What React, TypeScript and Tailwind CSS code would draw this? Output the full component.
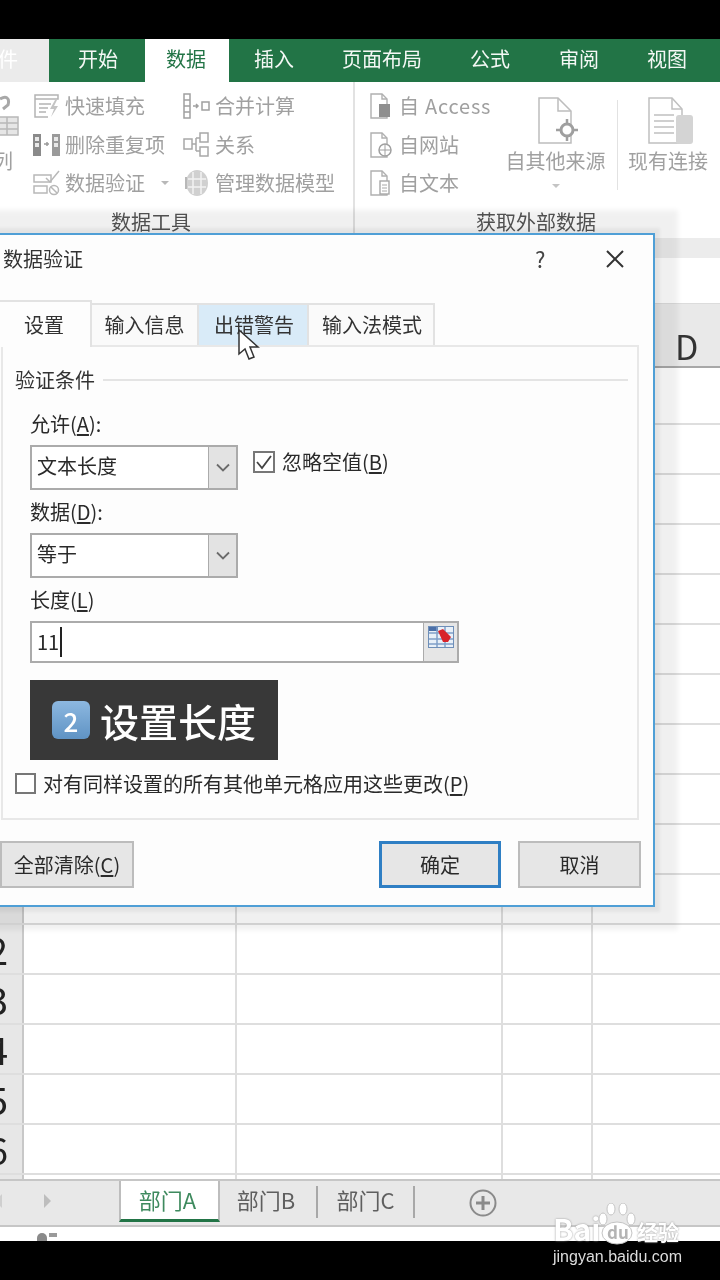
import React from 'react';

const font = "font-['Noto_Sans_CJK_SC','Noto_Sans',sans-serif]";
const rows = [1, 2, 3, 4, 5, 6, 7, 8, 9, 10, 11, 12, 13, 14, 15, 16];
const rowLabels: Record<number, string> = { 11: '2', 12: '3', 13: '4', 14: '5', 15: '6' };

const IconFlashFill = () => (
  <svg width="27" height="26" viewBox="0 0 27 26" fill="none" stroke="#b4b4b4" strokeWidth="1.5">
    <path d="M2 2h23v4H2zM2 6v18h13M6 11h12M6 15h9M6 19h7" />
    <path d="M22 7l-5 9h4l-3 8 7-11h-4l3-6z" fill="#c4c4c4" stroke="none" />
  </svg>
);
const IconDedupe = () => (
  <svg width="27" height="26" viewBox="0 0 27 26">
    <rect x="0" y="2" width="8" height="22" fill="#8a8a8a" />
    <rect x="2" y="5" width="4" height="4" fill="#e8e8e8" />
    <rect x="2" y="11" width="4" height="4" fill="#e8e8e8" />
    <rect x="19" y="2" width="8" height="22" fill="#9a9a9a" />
    <rect x="21" y="5" width="4" height="4" fill="#e8e8e8" />
    <rect x="21" y="11" width="4" height="4" fill="#e8e8e8" />
    <path d="M11 12h5M14 10v4" stroke="#9a9a9a" strokeWidth="1.5" />
  </svg>
);
const IconValidate = () => (
  <svg width="27" height="26" viewBox="0 0 27 26" fill="none" stroke="#b8b8b8" strokeWidth="1.5">
    <rect x="1" y="5" width="17" height="7" />
    <rect x="1" y="16" width="13" height="7" />
    <path d="M13 8l4 4L26 1" />
    <circle cx="21" cy="20" r="4.5" />
    <path d="M18 17l6 6" />
  </svg>
);
const IconConsolidate = () => (
  <svg width="27" height="26" viewBox="0 0 27 26" fill="none" stroke="#a0a0a0" strokeWidth="1.5">
    <rect x="1" y="1" width="6" height="24" />
    <path d="M1 7h6M1 13h6M1 19h6" />
    <path d="M10 13h5M13 11l2 2-2 2" />
    <rect x="19" y="9" width="7" height="8" />
  </svg>
);
const IconRelation = () => (
  <svg width="27" height="26" viewBox="0 0 27 26" fill="none" stroke="#a8a8a8" strokeWidth="1.5">
    <rect x="1" y="7" width="8" height="10" />
    <rect x="17" y="1" width="8" height="9" />
    <rect x="17" y="15" width="8" height="9" />
    <path d="M9 12h4M13 6v13M13 6h4M13 19h4" />
  </svg>
);
const IconModel = () => (
  <svg width="27" height="28" viewBox="0 0 27 28" fill="none">
    <ellipse cx="14" cy="14" rx="11" ry="13" fill="#d0d0d0" />
    <path d="M5 10h18M5 18h18M10 3v22M18 3v22" stroke="#f2f2f2" strokeWidth="1.5" />
    <path d="M3 8v12" stroke="#b8b8b8" strokeWidth="2" />
  </svg>
);
const FileShell = ({ children }: { children?: React.ReactNode }) => (
  <svg width="24" height="26" viewBox="0 0 24 26" fill="none">
    <path d="M1 1h11l5 5v19H1z" stroke="#b0b0b0" strokeWidth="1.4" fill="#fff" />
    <path d="M12 1v5h5" stroke="#b0b0b0" strokeWidth="1.4" />
    {children}
  </svg>
);

const RibbonRow = ({ icon, label, width, extra }: { icon: React.ReactNode; label: string; width: string; extra?: React.ReactNode }) => (
  <div className={`flex h-[38.5px] items-center ${width}`}>
    <div className="flex w-[32px] shrink-0 items-center">{icon}</div>
    <span className="whitespace-nowrap text-[20px] text-[#a0a0a0]">{label}</span>
    {extra}
  </div>
);

const Underlined = ({ before, letter, after }: { before: string; letter: string; after: string }) => (
  <span className="whitespace-nowrap">
    {before}(<u className="underline-offset-2">{letter}</u>){after}
  </span>
);

const ComboArrow = () => (
  <div className="flex w-[28px] shrink-0 items-center justify-center border-l border-[#ababab] bg-[#e3e3e3]">
    <svg width="14" height="9" viewBox="0 0 14 9" fill="none" stroke="#6b6b6b" strokeWidth="1.8">
      <path d="M1 1.5l6 6 6-6" />
    </svg>
  </div>
);

const Combo = ({ value }: { value: string }) => (
  <div className="flex h-[45px] w-[208px] border-2 border-[#ababab] bg-white">
    <div className="flex-1 pl-[5px] text-[20px] leading-[37px] text-[#2a2a2a]">{value}</div>
    <ComboArrow />
  </div>
);

const Checkbox = ({ checked, size }: { checked?: boolean; size: string }) => (
  <div className={`flex shrink-0 items-center justify-center border-2 border-[#777] bg-white ${size}`}>
    {checked && (
      <svg width="18" height="16" viewBox="0 0 18 16" fill="none" stroke="#444" strokeWidth="1.8">
        <path d="M2 8l5 6L16 2" />
      </svg>
    )}
  </div>
);

const DialogTab = ({ label, className }: { label: string; className: string }) => (
  <div className={`flex items-center justify-center whitespace-nowrap border-t-2 border-r-2 border-[#e2e2e2] text-[20px] text-[#333] ${className}`}>{label}</div>
);

const App: React.FC = () => {
  return (
    <div className={`relative flex h-[1280px] w-[720px] flex-col overflow-hidden bg-black ${font} blur-[0.5px]`}>
      <div className="h-[39px] shrink-0" />

      {/* Ribbon tabs */}
      <div className="flex h-[43px] shrink-0 items-stretch bg-[#227446] text-[20px] text-[#f4f8f5]">
        <div className="flex w-[49px] items-center overflow-hidden bg-[#ebebeb] pb-[3px] text-white">
          <span className="-ml-[2px]">件</span>
        </div>
        <div className="ml-[5px] flex items-center px-[24px] pb-[3px]">开始</div>
        <div className="ml-[3px] flex items-center bg-white pb-[3px] pl-[21px] pr-[23px] text-[#227446]">数据</div>
        <div className="flex items-center pb-[3px] pl-[25px] pr-[24px]">插入</div>
        <div className="flex items-center px-[24px] pb-[3px]">页面布局</div>
        <div className="flex items-center pb-[3px] pl-[24px] pr-[25px]">公式</div>
        <div className="flex items-center px-[24px] pb-[3px]">审阅</div>
        <div className="flex items-center px-[24px] pb-[3px]">视图</div>
      </div>

      {/* Ribbon body */}
      <div className="flex h-[156px] shrink-0 bg-white">
        <div className="flex w-[355px] shrink-0 flex-col border-r-2 border-[#e2e2e2]">
          <div className="flex h-[128px] pt-[5px]">
            <div className="flex w-[33px] shrink-0 flex-col overflow-hidden">
              <svg width="20" height="56" viewBox="0 0 20 56" fill="none" className="mt-[6px]">
                <path d="M0 6c6-4 10-1 8 6l-5 4" stroke="#a8a8a8" strokeWidth="3" />
                <rect x="-4" y="24" width="22" height="18" fill="#e6e6e6" stroke="#b8b8b8" strokeWidth="1.5" />
                <path d="M-4 30h22M-4 36h22M7 24v18" stroke="#b8b8b8" strokeWidth="1.5" />
              </svg>
              <span className="-ml-[7px] -mt-[3px] text-[20px] text-[#a0a0a0]">列</span>
            </div>
            <div className="flex w-[150px] shrink-0 flex-col">
              <RibbonRow icon={<IconFlashFill />} label="快速填充" width="w-full" />
              <RibbonRow icon={<IconDedupe />} label="删除重复项" width="w-full" />
              <RibbonRow
                icon={<IconValidate />}
                label="数据验证"
                width="w-full"
                extra={<span className="ml-[16px] h-0 w-0 border-x-[4px] border-t-[4px] border-x-transparent border-t-[#b8b8b8]" />}
              />
            </div>
            <div className="flex flex-col">
              <RibbonRow icon={<IconConsolidate />} label="合并计算" width="w-[170px]" />
              <RibbonRow icon={<IconRelation />} label="关系" width="w-[170px]" />
              <RibbonRow icon={<IconModel />} label="管理数据模型" width="w-[170px]" />
            </div>
          </div>
          <div className="pl-[111px] text-[20px] leading-[24px] text-[#555]">数据工具</div>
        </div>

        <div className="flex flex-1 flex-col">
          <div className="flex h-[128px] pt-[5px]">
            <div className="ml-[15px] flex w-[135px] shrink-0 flex-col">
              <div className="flex h-[38.5px] items-center">
                <div className="w-[29px] shrink-0">
                  <FileShell>
                    <rect x="9" y="11" width="11" height="13" fill="#8f8f8f" />
                  </FileShell>
                </div>
                <span className="whitespace-nowrap text-[20px] tracking-[0.8px] text-[#a0a0a0]">自 Access</span>
              </div>
              <div className="flex h-[38.5px] items-center">
                <div className="w-[29px] shrink-0">
                  <FileShell>
                    <circle cx="15" cy="18" r="6" fill="#fff" stroke="#a0a0a0" strokeWidth="1.5" />
                    <path d="M9 18h12M15 12v12" stroke="#a0a0a0" />
                  </FileShell>
                </div>
                <span className="whitespace-nowrap text-[20px] text-[#a0a0a0]">自网站</span>
              </div>
              <div className="flex h-[38.5px] items-center">
                <div className="w-[29px] shrink-0">
                  <FileShell>
                    <rect x="10" y="11" width="9" height="13" fill="#fff" stroke="#a8a8a8" strokeWidth="1.4" />
                    <path d="M12 15h5M12 18h5M12 21h5" stroke="#a8a8a8" />
                  </FileShell>
                </div>
                <span className="whitespace-nowrap text-[20px] text-[#a0a0a0]">自文本</span>
              </div>
            </div>
            <div className="flex w-[101px] shrink-0 flex-col items-center">
              <svg width="44" height="48" viewBox="0 0 44 48" fill="none" className="ml-[6px] mt-[10px]">
                <path d="M2 1h19l13 13v32H2z" stroke="#bdbdbd" strokeWidth="1.5" fill="#fff" />
                <path d="M21 1v13h13" stroke="#bdbdbd" strokeWidth="1.5" />
                <circle cx="30" cy="33" r="6" stroke="#9f9f9f" strokeWidth="3" fill="#fff" />
                <path d="M30 22v5M30 39v5M19 33h5M36 33h5" stroke="#9f9f9f" strokeWidth="2.5" />
              </svg>
              <span className="mt-[1px] whitespace-nowrap text-[20px] text-[#a0a0a0]">自其他来源</span>
              <span className="mt-[8px] h-0 w-0 border-x-[4px] border-t-[4px] border-x-transparent border-t-[#c4c4c4]" />
            </div>
            <div className="ml-[11px] mt-[13px] h-[90px] w-[1px] shrink-0 bg-[#e2e2e2]" />
            <div className="ml-[10px] flex w-[80px] shrink-0 flex-col items-center">
              <svg width="46" height="48" viewBox="0 0 46 48" fill="none" className="ml-[6px] mt-[10px]">
                <path d="M1 1h23l10 11v34H1z" stroke="#c0c0c0" strokeWidth="1.5" fill="#fff" />
                <path d="M24 1v11h10M6 18h20M6 24h20M6 30h20M6 36h20" stroke="#c0c0c0" strokeWidth="1.5" />
                <rect x="28" y="18" width="17" height="29" rx="3" fill="#d4d4d4" />
              </svg>
              <span className="mt-[1px] whitespace-nowrap text-[20px] text-[#a0a0a0]">现有连接</span>
            </div>
          </div>
          <div className="pl-[121px] text-[20px] leading-[24px] text-[#555]">获取外部数据</div>
        </div>
      </div>

      {/* Formula bar area */}
      <div className="h-[65px] shrink-0 bg-white">
        <div className="h-[20px] bg-[#ececec]" />
      </div>

      {/* Column headers */}
      <div className="flex h-[65px] shrink-0 items-center justify-end border-t border-b-2 border-t-[#dcdcdc] border-b-[#a8a8a8] bg-[#e9e9e9] pt-[22px]">
        <span className="w-[66px] pl-[21px] text-[34px] leading-none text-[#333]">D</span>
      </div>

      {/* Grid */}
      <div className="flex-1 overflow-hidden bg-white">
        <div className="h-[57px] border-b-2 border-[#dedede]" />
        {rows.map((r) => (
          <div key={r} className="flex h-[50px] border-b-2 border-[#dedede]">
            <div className="flex w-[24px] shrink-0 items-center justify-end overflow-hidden border-r-2 border-[#c8c8c8] bg-[#e7e7e7] pr-[14px] text-[38px] leading-none text-[#222]">
              {rowLabels[r] ?? ''}
            </div>
            <div className="w-[213px] shrink-0 border-r-2 border-[#dedede]" />
            <div className="w-[266px] shrink-0 border-r-2 border-[#dedede]" />
            <div className="w-[90px] shrink-0 border-r-2 border-[#dedede]" />
          </div>
        ))}
      </div>

      {/* Sheet tabs */}
      <div className="flex h-[48px] shrink-0 items-start border-t-2 border-b-2 border-[#c6c6c6] bg-[#e8e8e8] text-[22px] text-[#5f5f5f]">
        <div className="flex h-[40px] w-[119px] shrink-0 items-center gap-[42px]">
          <span className="-ml-[5px] h-0 w-0 border-y-[7px] border-r-[7px] border-y-transparent border-r-[#cfcfcf]" />
          <span className="h-0 w-0 border-y-[7px] border-l-[7px] border-y-transparent border-l-[#bdbdbd]" />
        </div>
        <div className="flex h-[41px] w-[101px] shrink-0 items-center justify-center border-x-2 border-b-[3px] border-x-[#bdbdbd] border-b-[#227446] bg-white pb-[2px] pr-[4px] text-[#3e8a5e]">
          部门A
        </div>
        <div className="flex h-[32px] w-[98px] shrink-0 translate-y-[5px] items-center justify-center border-r-2 border-[#a8a8a8] pb-[5px] pr-[4px]">部门B</div>
        <div className="flex h-[32px] w-[97px] shrink-0 translate-y-[5px] items-center justify-center border-r-2 border-[#a8a8a8] pb-[5px]">部门C</div>
        <svg width="28" height="28" viewBox="0 0 28 28" fill="none" stroke="#8a8a8a" className="ml-[54px] mt-[8px]">
          <circle cx="14" cy="14" r="12.5" strokeWidth="2" />
          <path d="M14 7v14M7 14h14" strokeWidth="3" />
        </svg>
      </div>

      {/* Status bar */}
      <div className="h-[14px] shrink-0 bg-white pl-[37px] pt-[6px]">
        <div className="flex gap-[2px]">
          <span className="h-[8px] w-[10px] rounded-t-full bg-[#8a8a8a]" />
          <span className="h-[4px] w-[8px] bg-[#9a9a9a]" />
        </div>
      </div>
      <div className="h-[39px] shrink-0" />

      {/* Dialog */}
      <div className="absolute left-0 top-[233px] flex h-[674px] w-[655px] flex-col border-y-2 border-r-2 border-[#4f9fd6] bg-[#fdfdfd] text-[#2a2a2a] shadow-[0_0_3px_5px_rgba(0,0,0,0.05),0_0_5px_23px_rgba(0,0,0,0.06)]">
        <div className="flex h-[65px] shrink-0 items-center pb-[18px] pl-[3px]">
          <span className="text-[20px] text-[#333]">数据验证</span>
          <span className="ml-[452px] text-[22px] text-[#444]">?</span>
          <svg width="20" height="20" viewBox="0 0 20 20" fill="none" stroke="#333" strokeWidth="2" className="ml-[60px]">
            <path d="M2 2l16 16M18 2L2 18" />
          </svg>
        </div>

        <div className="flex h-[45px] shrink-0 items-end">
          <DialogTab label="设置" className="relative z-10 -mb-[2px] h-[47px] w-[92px] bg-[#fdfdfd] pr-[2px]" />
          <DialogTab label="输入信息" className="h-[42px] w-[107px] bg-[#fafafa]" />
          <DialogTab label="出错警告" className="h-[42px] w-[110px] bg-[#d9ebf8] pl-[2px]" />
          <DialogTab label="输入法模式" className="h-[42px] w-[126px] bg-[#fafafa] pl-[2px]" />
        </div>

        <div className="ml-[1px] flex h-[475px] w-[638px] shrink-0 flex-col border-2 border-[#e8e8e8] pl-[12px]">
          <div className="mt-[23px] flex h-[20px] items-center">
            <span className="whitespace-nowrap text-[20px] leading-[20px] text-[#333]">验证条件</span>
            <div className="ml-[8px] h-[2px] w-[525px] bg-[#e4e4e4]" />
          </div>
          <div className="ml-[15px] mt-[20px] h-[28px] text-[20px] leading-[28px]">
            <Underlined before="允许" letter="A" after=":" />
          </div>
          <div className="ml-[15px] mt-[7px] flex">
            <Combo value="文本长度" />
            <div className="ml-[15px] mt-[6px] flex h-[22px] items-center gap-[7px] text-[20px]">
              <Checkbox checked size="h-[22px] w-[22px]" />
              <Underlined before="忽略空值" letter="B" after="" />
            </div>
          </div>
          <div className="ml-[15px] mt-[8px] h-[28px] text-[20px] leading-[28px]">
            <Underlined before="数据" letter="D" after=":" />
          </div>
          <div className="ml-[15px] mt-[7px]">
            <Combo value="等于" />
          </div>
          <div className="ml-[15px] mt-[8px] h-[28px] text-[20px] leading-[28px]">
            <Underlined before="长度" letter="L" after="" />
          </div>
          <div className="ml-[15px] mt-[7px] flex h-[42px] w-[429px] border-2 border-[#ababab] bg-white">
            <div className="flex flex-1 items-center pl-[5px] text-[20px]">
              <span>11</span>
              <span className="ml-[1px] h-[30px] w-[2px] bg-[#222]" />
            </div>
            <div className="flex w-[34px] shrink-0 justify-center border-l border-[#ababab] bg-[#e6e6e6] pt-[3px]">
              <svg width="26" height="24" viewBox="0 0 26 24">
                <rect x="0.5" y="0.5" width="25" height="21" fill="#e8f0f8" stroke="#6f8fb8" />
                <rect x="1" y="1" width="9" height="4" fill="#4a6fa8" />
                <path d="M1 7h24M1 13h24M1 18h24M9 1v20M17 1v20" stroke="#7f9fc8" strokeWidth="1.5" />
                <path d="M10 5l5-2 8 8-3 5-5 0z" fill="#d8232a" />
              </svg>
            </div>
          </div>
          <div className="ml-[15px] mt-[17px] flex h-[80px] w-[248px] items-center bg-[#383838] pl-[22px]">
            <div className="flex h-[38px] w-[38px] shrink-0 items-center justify-center rounded-[6px] bg-gradient-to-b from-[#8db8e0] to-[#5f93c4] text-[26px] font-medium text-white">
              2
            </div>
            <span className="ml-[10px] whitespace-nowrap text-[39px] font-medium leading-none text-white">设置长度</span>
          </div>
          <div className="mt-[13px] flex h-[21px] items-center gap-[7px] text-[20px]">
            <Checkbox size="h-[21px] w-[21px]" />
            <Underlined before="对有同样设置的所有其他单元格应用这些更改" letter="P" after="" />
          </div>
        </div>

        <div className="mt-[21px] flex h-[47px] shrink-0 text-[20px]">
          <div className="flex w-[134px] items-center justify-center border-2 border-[#bcbcbc] bg-[#e6e6e6]">
            <Underlined before="全部清除" letter="C" after="" />
          </div>
          <div className="ml-[245px] flex w-[122px] items-center justify-center border-[3px] border-[#2f7fc4] bg-[#e6e6e6]">确定</div>
          <div className="ml-[17px] flex w-[123px] items-center justify-center border-2 border-[#bcbcbc] bg-[#e6e6e6]">取消</div>
        </div>
      </div>

      {/* Mouse cursor */}
      <svg width="22" height="32" viewBox="0 0 22 32" className="absolute left-[238px] top-[329px]">
        <path d="M1 1v24l6-5 4 10 5-2-4-10h8z" fill="#fff" stroke="#333" strokeWidth="1.5" />
      </svg>

      {/* Watermark */}
      <div className="absolute left-[553px] top-[1203px] flex flex-col">
        <div className="flex h-[42px] items-end">
          <span className="w-[44px] text-[30px] font-bold leading-[34px] text-white [text-shadow:0_0_2px_#8a8a8a]">Bai</span>
          <div className="relative ml-[1px] h-[42px] w-[38px]">
            <svg width="38" height="42" viewBox="0 0 38 42" fill="#fff" stroke="#c4c4c4" strokeWidth="1" className="absolute left-0 top-0">
              <ellipse cx="5" cy="16" rx="4" ry="6" />
              <ellipse cx="13" cy="6" rx="4" ry="6" />
              <ellipse cx="25" cy="6" rx="4" ry="6" />
              <ellipse cx="33" cy="16" rx="4" ry="6" />
              <ellipse cx="19" cy="30" rx="15" ry="11" />
            </svg>
            <span className="absolute left-[9px] top-[19px] text-[17px] font-bold leading-[20px] text-[#b4b4b4]">du</span>
          </div>
          <span className="ml-[1px] text-[21px] font-bold leading-[28px] text-white [text-shadow:0_0_2px_#8a8a8a]">经验</span>
        </div>
        <span className="mt-[2px] whitespace-nowrap font-['Liberation_Sans',sans-serif] text-[16px] leading-[20px] text-[#dcdcdc]">jingyan.baidu.com</span>
      </div>
    </div>
  );
};

export default App;
